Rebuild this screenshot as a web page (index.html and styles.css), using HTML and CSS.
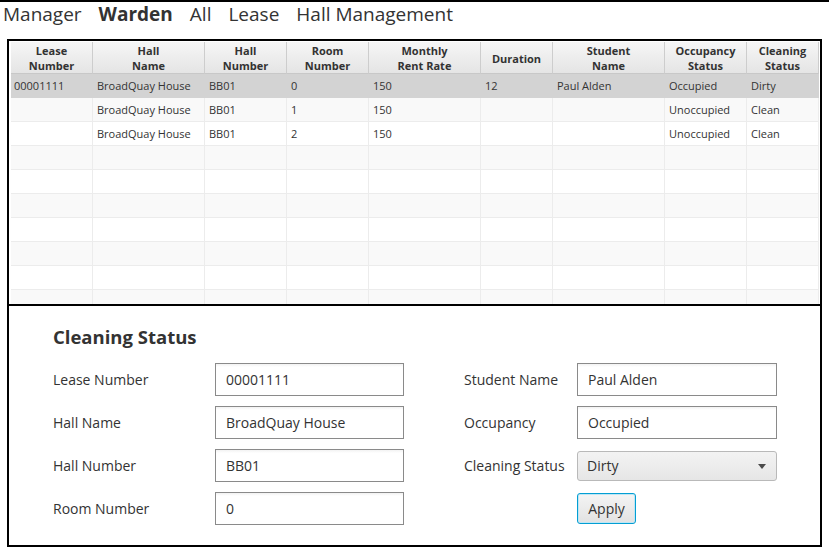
FILE: index.html
```html
<!DOCTYPE html>
<html lang="en">
<head>
<meta charset="utf-8">
<title>Warden - Cleaning Status</title>
<link rel="stylesheet" href="styles.css">
</head>
<body>
<div class="app">
  <nav class="menubar">
    <span class="menu-item">Manager</span>
    <span class="menu-item active">Warden</span>
    <span class="menu-item">All</span>
    <span class="menu-item">Lease</span>
    <span class="menu-item">Hall Management</span>
  </nav>

  <div class="frame">
    <div class="table-wrap">
      <div class="table">
        <div class="row head">
          <div class="th">Lease<br>Number</div>
          <div class="th">Hall<br>Name</div>
          <div class="th">Hall<br>Number</div>
          <div class="th">Room<br>Number</div>
          <div class="th">Monthly<br>Rent Rate</div>
          <div class="th">Duration</div>
          <div class="th">Student<br>Name</div>
          <div class="th">Occupancy<br>Status</div>
          <div class="th">Cleaning<br>Status</div>
        </div>
        <div class="row selected">
          <div class="td">00001111</div><div class="td">BroadQuay House</div><div class="td">BB01</div><div class="td">0</div><div class="td">150</div><div class="td">12</div><div class="td">Paul Alden</div><div class="td">Occupied</div><div class="td">Dirty</div>
        </div>
        <div class="row odd">
          <div class="td"></div><div class="td">BroadQuay House</div><div class="td">BB01</div><div class="td">1</div><div class="td">150</div><div class="td"></div><div class="td"></div><div class="td">Unoccupied</div><div class="td">Clean</div>
        </div>
        <div class="row">
          <div class="td"></div><div class="td">BroadQuay House</div><div class="td">BB01</div><div class="td">2</div><div class="td">150</div><div class="td"></div><div class="td"></div><div class="td">Unoccupied</div><div class="td">Clean</div>
        </div>
        <div class="row odd"><div class="td"></div><div class="td"></div><div class="td"></div><div class="td"></div><div class="td"></div><div class="td"></div><div class="td"></div><div class="td"></div><div class="td"></div></div>
        <div class="row"><div class="td"></div><div class="td"></div><div class="td"></div><div class="td"></div><div class="td"></div><div class="td"></div><div class="td"></div><div class="td"></div><div class="td"></div></div>
        <div class="row odd"><div class="td"></div><div class="td"></div><div class="td"></div><div class="td"></div><div class="td"></div><div class="td"></div><div class="td"></div><div class="td"></div><div class="td"></div></div>
        <div class="row"><div class="td"></div><div class="td"></div><div class="td"></div><div class="td"></div><div class="td"></div><div class="td"></div><div class="td"></div><div class="td"></div><div class="td"></div></div>
        <div class="row odd"><div class="td"></div><div class="td"></div><div class="td"></div><div class="td"></div><div class="td"></div><div class="td"></div><div class="td"></div><div class="td"></div><div class="td"></div></div>
        <div class="row"><div class="td"></div><div class="td"></div><div class="td"></div><div class="td"></div><div class="td"></div><div class="td"></div><div class="td"></div><div class="td"></div><div class="td"></div></div>
        <div class="row odd"><div class="td"></div><div class="td"></div><div class="td"></div><div class="td"></div><div class="td"></div><div class="td"></div><div class="td"></div><div class="td"></div><div class="td"></div></div>
      </div>
    </div>

    <section class="form">
      <h2 class="form-title">Cleaning Status</h2>
      <div class="fields">
        <div class="group group-left">
          <label class="lbl">Lease Number</label><input class="field" type="text" value="00001111" readonly>
          <label class="lbl">Hall Name</label><input class="field" type="text" value="BroadQuay House" readonly>
          <label class="lbl">Hall Number</label><input class="field" type="text" value="BB01" readonly>
          <label class="lbl">Room Number</label><input class="field" type="text" value="0" readonly>
        </div>
        <div class="group group-right">
          <label class="lbl">Student Name</label><input class="field" type="text" value="Paul Alden" readonly>
          <label class="lbl">Occupancy</label><input class="field" type="text" value="Occupied" readonly>
          <label class="lbl">Cleaning Status</label>
          <div class="combo"><span class="combo-text">Dirty</span><span class="combo-arrow"></span></div>
          <span class="spacer"></span>
          <div class="btn-cell"><button class="btn" type="button">Apply</button></div>
        </div>
      </div>
    </section>
  </div>
</div>
</body>
</html>
```

FILE: styles.css
```css
* { box-sizing: border-box; }

html, body {
  margin: 0;
  padding: 0;
  background: #ffffff;
}

body {
  font-family: "Open Sans", "Noto Sans", "Liberation Sans", sans-serif;
  color: #333333;
}

.app {
  width: 829px;
  height: 549px;
  border-top: 2px solid #000000;
}

/* Menu bar */
.menubar {
  display: flex;
  align-items: flex-start;
  gap: 17px;
  height: 37px;
  padding-left: 3px;
  font-size: 19px;
  line-height: 24px;
  color: #333333;
}

.menu-item.active {
  font-weight: 700;
}

/* Framed content */
.frame {
  margin-left: 7px;
  width: 815px;
  border: 2px solid #000000;
  background: #ffffff;
}

.table-wrap {
  height: 265px;
  padding: 1px 1px 0 2px;
  border-bottom: 2px solid #000000;
  overflow: hidden;
}

.table {
  width: 808px;
}

.row {
  display: grid;
  grid-template-columns: 82px 112px 82px 82px 112px 72px 112px 82px 72px;
  height: 24px;
  background: #ffffff;
}

.row.odd { background: #f9f9f9; }
.row.selected { background: #d3d3d3; }

.td {
  border-right: 1px solid #ececec;
  border-bottom: 1px solid #ececec;
  padding-left: 4px;
  font-size: 11px;
  line-height: 23px;
  color: #333333;
  white-space: nowrap;
  overflow: hidden;
}

.td:first-child {
  padding-left: 3px;
}

.row.selected .td {
  border-right-color: #d3d3d3;
  border-bottom-color: #d3d3d3;
}

.row.head {
  height: 32px;
  background: linear-gradient(to bottom, #f6f6f6 0%, #ececec 55%, #e4e4e4 100%);
}

.th {
  display: flex;
  align-items: center;
  justify-content: center;
  text-align: center;
  border-right: 1px solid #cdcdcd;
  border-bottom: 1px solid #c8c8c8;
  font-size: 11px;
  font-weight: 700;
  line-height: 15px;
  color: #333333;
  padding-top: 1px;
}

/* Form */
.form {
  height: 239px;
  padding: 18px 0 0 44px;
  background: #ffffff;
}

.form-title {
  margin: 0 0 13px 0;
  font-size: 18.5px;
  font-weight: 700;
  line-height: 26px;
  color: #333333;
}

.fields {
  display: flex;
  gap: 60px;
}

.group {
  display: grid;
  grid-auto-rows: 33px;
  row-gap: 10px;
  align-items: center;
}

.group-left { grid-template-columns: 162px 189px; }
.group-right { grid-template-columns: 113px 200px; }

.lbl {
  font-size: 14px;
  line-height: 20px;
  color: #333333;
  white-space: nowrap;
}

.field {
  height: 33px;
  width: 100%;
  margin: 0;
  padding: 0 10px;
  border: 1px solid #8a8a8a;
  border-radius: 0;
  background: linear-gradient(to bottom, #f2f2f2 0px, #ffffff 3px);
  font-family: "Open Sans", "Noto Sans", "Liberation Sans", sans-serif;
  font-size: 14px;
  color: #333333;
  outline: none;
}

.combo {
  height: 30px;
  display: flex;
  align-items: center;
  justify-content: space-between;
  padding: 0 10px 0 9px;
  border: 1px solid #b9b9b9;
  border-radius: 3px;
  background: linear-gradient(to bottom, #f3f3f3 0%, #e6e6e6 100%);
  font-size: 14px;
  color: #333333;
}

.combo-arrow {
  width: 0;
  height: 0;
  border-left: 4.5px solid transparent;
  border-right: 4.5px solid transparent;
  border-top: 5px solid #4a4a4a;
  margin-top: 1px;
}

.btn-cell {
  display: flex;
  align-items: center;
}

.btn {
  width: 59px;
  height: 31px;
  margin: 0;
  padding: 0;
  border: 1px solid #039ed3;
  border-radius: 3px;
  box-shadow: inset 0 0 0 1px #bfe6f4;
  background: linear-gradient(to bottom, #f4f4f4 0%, #e2e2e2 100%);
  font-family: "Open Sans", "Noto Sans", "Liberation Sans", sans-serif;
  font-size: 14px;
  color: #333333;
}
```
